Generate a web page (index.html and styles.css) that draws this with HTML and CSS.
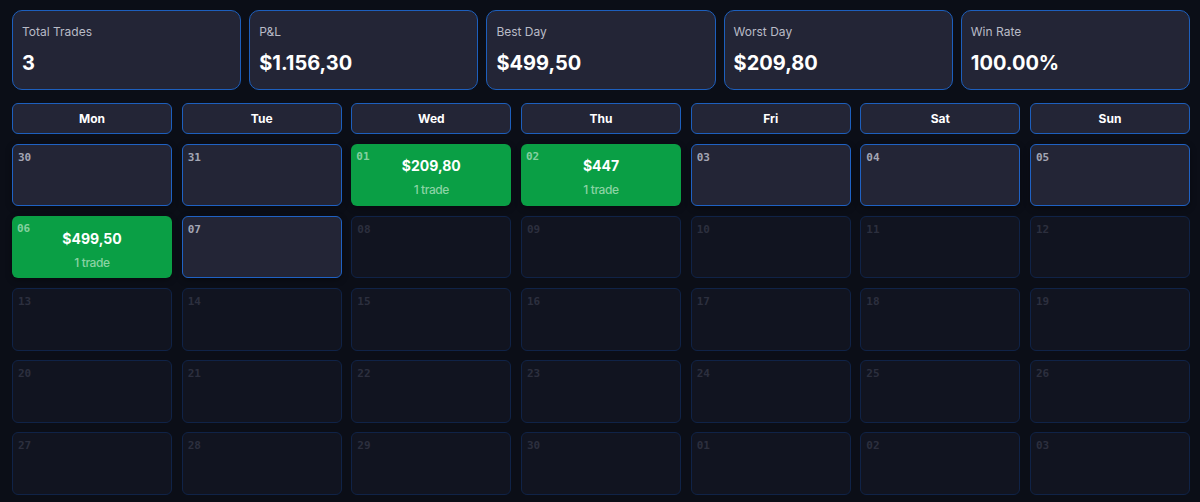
FILE: index.html
```html
<!DOCTYPE html>
<html>
<head>
<meta charset="utf-8">
<link rel="stylesheet" href="styles.css">
</head>
<body>
<div class="page">
  <div class="stats">
    <div class="stat"><div class="label">Total Trades</div><div class="value">3</div></div>
    <div class="stat"><div class="label">P&amp;L</div><div class="value">$1.156,30</div></div>
    <div class="stat"><div class="label">Best Day</div><div class="value">$499,50</div></div>
    <div class="stat"><div class="label">Worst Day</div><div class="value">$209,80</div></div>
    <div class="stat"><div class="label">Win Rate</div><div class="value">100.00%</div></div>
  </div>
  <div class="cal">
    <div class="head">Mon</div><div class="head">Tue</div><div class="head">Wed</div><div class="head">Thu</div><div class="head">Fri</div><div class="head">Sat</div><div class="head">Sun</div>

    <div class="cell cur"><span class="num">30</span></div>
    <div class="cell cur"><span class="num">31</span></div>
    <div class="cell win"><span class="num">01</span><div class="amt">$209,80</div><div class="cnt">1 trade</div></div>
    <div class="cell win"><span class="num">02</span><div class="amt">$447</div><div class="cnt">1 trade</div></div>
    <div class="cell cur"><span class="num">03</span></div>
    <div class="cell cur"><span class="num">04</span></div>
    <div class="cell cur"><span class="num">05</span></div>

    <div class="cell win"><span class="num">06</span><div class="amt">$499,50</div><div class="cnt">1 trade</div></div>
    <div class="cell cur"><span class="num">07</span></div>
    <div class="cell off"><span class="num">08</span></div>
    <div class="cell off"><span class="num">09</span></div>
    <div class="cell off"><span class="num">10</span></div>
    <div class="cell off"><span class="num">11</span></div>
    <div class="cell off"><span class="num">12</span></div>

    <div class="cell off"><span class="num">13</span></div>
    <div class="cell off"><span class="num">14</span></div>
    <div class="cell off"><span class="num">15</span></div>
    <div class="cell off"><span class="num">16</span></div>
    <div class="cell off"><span class="num">17</span></div>
    <div class="cell off"><span class="num">18</span></div>
    <div class="cell off"><span class="num">19</span></div>

    <div class="cell off"><span class="num">20</span></div>
    <div class="cell off"><span class="num">21</span></div>
    <div class="cell off"><span class="num">22</span></div>
    <div class="cell off"><span class="num">23</span></div>
    <div class="cell off"><span class="num">24</span></div>
    <div class="cell off"><span class="num">25</span></div>
    <div class="cell off"><span class="num">26</span></div>

    <div class="cell off"><span class="num">27</span></div>
    <div class="cell off"><span class="num">28</span></div>
    <div class="cell off"><span class="num">29</span></div>
    <div class="cell off"><span class="num">30</span></div>
    <div class="cell off"><span class="num">01</span></div>
    <div class="cell off"><span class="num">02</span></div>
    <div class="cell off"><span class="num">03</span></div>
  </div>
</div>
</body>
</html>
```

FILE: styles.css
```css
html, body {
  margin: 0;
  padding: 0;
  background: #0b0e17;
  font-family: Inter, "Liberation Sans", sans-serif;
  color: #fff;
}

.page {
  padding: 10px 10px 0 12px;
}

.stats {
  display: grid;
  grid-template-columns: repeat(5, 1fr);
  gap: 8px;
  margin-bottom: 13px;
}

.stat {
  height: 80px;
  box-sizing: border-box;
  background: #232536;
  border: 1.5px solid #1d5fbd;
  border-radius: 10px;
  padding: 13px 9px 0 9px;
}

.stat .label {
  font-size: 12px;
  line-height: 16px;
  color: #b9bbc6;
}

.stat .value {
  margin-top: 11px;
  font-size: 20px;
  line-height: 24px;
  font-weight: 700;
  color: #fff;
}

.cal {
  display: grid;
  grid-template-columns: repeat(7, 1fr);
  grid-auto-rows: 62.6px;
  grid-template-rows: 31px;
  column-gap: 9.6px;
  row-gap: 9.6px;
}

.head {
  box-sizing: border-box;
  background: #232536;
  border: 1.5px solid #1d5fbd;
  border-radius: 6px;
  display: flex;
  align-items: center;
  justify-content: center;
  font-size: 12px;
  font-weight: 700;
  color: #fff;
}

.cell {
  position: relative;
  box-sizing: border-box;
  border-radius: 6px;
  display: flex;
  flex-direction: column;
  align-items: center;
  justify-content: center;
  padding-top: 5px;
}

.num {
  position: absolute;
  left: 5px;
  top: 6px;
  font-family: "DejaVu Sans Mono", "Liberation Mono", monospace;
  font-weight: 700;
  font-size: 11px;
  line-height: 13px;
}

.cur {
  background: #232536;
  border: 1.5px solid #1f62c4;
  box-shadow: 0 2px 6px rgba(0, 0, 0, 0.35);
}

.cur .num {
  color: #a3a6b4;
}

.win {
  background: #0a9f45;
  box-shadow: 0 2px 6px rgba(0, 0, 0, 0.35);
}

.win .num {
  color: #84d09f;
}

.win .amt {
  font-size: 14px;
  line-height: 20px;
  font-weight: 700;
  color: #fff;
}

.win .cnt {
  margin-top: 6px;
  font-size: 12px;
  line-height: 16px;
  font-weight: 500;
  color: #8ad3a4;
  letter-spacing: -0.4px;
}

.off {
  background: #111420;
  border: 1px solid #102347;
}

.off .num {
  color: #2c2f3e;
}
```
